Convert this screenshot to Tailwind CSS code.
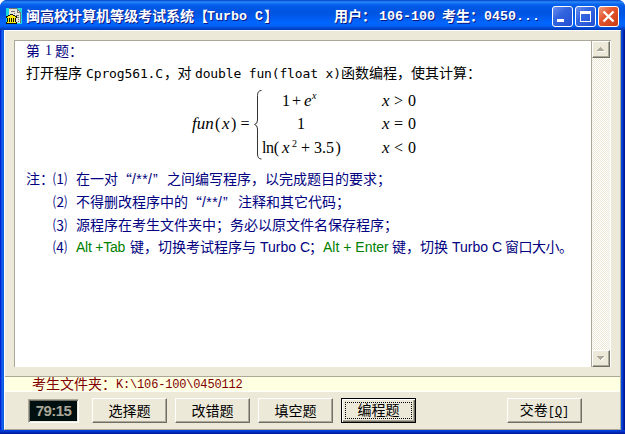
<!DOCTYPE html>
<html lang="zh-CN">
<head>
<meta charset="utf-8">
<title>闽高校计算机等级考试系统</title>
<script src="https://cdn.jsdelivr.net/npm/@tailwindcss/browser@4"></script>
</head>
<body class="bg-white overflow-hidden">
<div class="w-[625px] h-[434px] flex flex-col rounded-t-[7px] overflow-hidden bg-[linear-gradient(to_right,#0019cf_0,#0831d9_1px,#166aee_2px,#0855dd_4px,#0855dd_621px,#0441d8_622px,#001ea0_624px,#00138c_625px)] whitespace-nowrap font-['Liberation_Sans','Noto_Sans_CJK_SC',sans-serif] text-[14px]">

  <!-- title bar -->
  <header class="h-[30px] shrink-0 flex items-start pl-[6px] bg-[linear-gradient(to_bottom,#0040c8_0,#2a88f8_2px,#0a66f0_4px,#0058e6_7px,#0054e0_13px,#005cf0_18px,#0066ff_23px,#0062f8_26px,#0048d0_28px,#003ab8_30px)] text-white">
    <svg class="w-[16px] h-[16px] mt-[8px] shrink-0" viewBox="0 0 16 16" shape-rendering="crispEdges">
      <path fill="#18d8e0" d="M0 0h16v16H0z"/>
      <path fill="#e4e4dc" d="M3 1h8l4 4v10H3z"/>
      <path fill="#77776f" d="M3 0h8v1H3zM11 1h1v3h3v1h-4zM12 2h1v1h-1zM13 3h1v1h-1zM5 3h4v1H5zM8 5h1v1H8zM10 7h3v1h-3zM11 9h2v1h-2zM12 11h1v1h-1zM12 13h1v1h-1zM14 5h1v10h-1z"/>
      <path fill="#101010" d="M4 6h3v1h2v1h2v2h-1v4h1v2H0v-2h1v-4H0V8h2V7h2z"/>
      <path fill="#ffec10" d="M4 7h3v1h2v1h1v1H1V9h1V8h2zM2 10h1v4H2zM4 10h1v4H4zM6 10h1v4H6zM8 10h1v4H8zM1 14h9v1H1z"/>
    </svg>
    <div class="flex font-bold leading-[20px] mt-[6px] ml-[4px] w-[526px] [text-shadow:1px_1px_0_#0a1883]">
      <span class="w-[181px]">闽高校计算机等级考试系统【</span>
      <span class="w-[57px] text-[13.33px] leading-[22px] font-['Liberation_Mono']">Turbo C</span>
      <span class="w-[70px]">】</span>
      <span class="w-[45px]">用户：</span>
      <span class="w-[63px] text-[13.33px] leading-[22px] font-['Liberation_Mono']">106-100</span>
      <span class="w-[44px]">考生：</span>
      <span class="text-[13.33px] leading-[22px] font-['Liberation_Mono'] ml-[-2px]">0450...</span>
    </div>
    <div class="flex gap-[2px] mt-[6px]">
      <svg class="w-[21px] h-[21px]" viewBox="0 0 21 21"><defs><linearGradient id="b" x2="1" y2="1"><stop stop-color="#6d92f0"/><stop offset=".4" stop-color="#3465e0"/><stop offset="1" stop-color="#1f4fd2"/></linearGradient><linearGradient id="r" x2="1" y2="1"><stop stop-color="#f0a083"/><stop offset=".4" stop-color="#e4562f"/><stop offset="1" stop-color="#c93a12"/></linearGradient></defs><rect x=".5" y=".5" width="20" height="20" rx="2.5" fill="url(#b)" stroke="#fff"/><path fill="#fff" d="M5 13h7v3H5z"/></svg>
      <svg class="w-[21px] h-[21px]" viewBox="0 0 21 21"><rect x=".5" y=".5" width="20" height="20" rx="2.5" fill="url(#b)" stroke="#fff"/><path fill="#fff" fill-rule="evenodd" d="M5 5h11v11H5zM6 8h9v7H6z"/></svg>
      <svg class="w-[21px] h-[21px]" viewBox="0 0 21 21"><rect x=".5" y=".5" width="20" height="20" rx="2.5" fill="url(#r)" stroke="#fff"/><path stroke="#fff" stroke-width="2.4" d="M5.5 5.5l10 10M15.500 5.500l-10 10"/></svg>
    </div>
  </header>

  <!-- client area -->
  <main class="mx-[4px] h-[400px] shrink-0 flex flex-col bg-[#ece9d8] border-t border-l border-t-white border-l-white border-r border-b border-r-[#aca899] border-b-[#aca899]">
    <div class="ml-[9px] mt-[9px] w-[597px] h-[327px] flex border-t border-l border-[#aca899] shrink-0">
      <section class="w-[576px] h-[326px] bg-white text-[#000080] pl-[11px] overflow-hidden flex flex-col">
        <div class="flex shrink-0 h-[21px] leading-[20px]"><span class="w-[19px]">第</span><span class="w-[10px] font-['Liberation_Serif']">1</span><span>题：</span></div>
        <div class="flex shrink-0 h-[22px] leading-[22px] text-black"><span class="w-[60px]">打开程序</span><span class="w-[78px] text-[13px] leading-[23px] tracking-[-0.13px] font-['DejaVu_Sans_Mono']">Cprog561.C</span><span class="w-[31px] tracking-[-0.5px]">，对</span><span class="w-[146px] text-[13px] leading-[23px] tracking-[-0.15px] font-['DejaVu_Sans_Mono']">double fun(float x)</span><span>函数编程，使其计算：</span></div>

        <!-- piecewise formula -->
        <svg class="block shrink-0 w-[250px] h-[84px] ml-[154px]" viewBox="180 84 250 84" font-family="Liberation Serif, serif" font-size="16" fill="#000">
          <g font-style="italic"><text x="192" y="129" font-size="17">fun</text><text x="222" y="129" font-size="17">x</text><text x="304" y="106" font-size="17">e</text><text x="312" y="99" font-size="10">x</text><text x="282" y="153" font-size="17">x</text><text x="382" y="106" font-size="17">x</text><text x="382" y="129" font-size="17">x</text><text x="382" y="153" font-size="17">x</text></g>
          <text x="215" y="129">(</text><text x="231" y="129">)</text><text x="240.500" y="129">=</text>
          <text x="282" y="106">1</text><text x="292" y="106">+</text><text x="297" y="129">1</text>
          <text x="262" y="153" textLength="17">ln(</text><text x="292" y="146.500" font-size="10">2</text><text x="301" y="153">+</text><text x="314" y="153" textLength="20">3.5</text><text x="335.500" y="153">)</text>
          <text x="394" y="106">&gt;</text><text x="394" y="129">=</text><text x="394" y="153">&lt;</text>
          <text x="408" y="106">0</text><text x="408" y="129">0</text><text x="408" y="153">0</text>
          <path d="M261.500 90.500q-4 0-4 5V120q0 4-3 4.500q3 .5 3 4.500v25q0 5 4 5" fill="none" stroke="#333" stroke-width="1"/>
        </svg>

        <div class="flex shrink-0 h-[23px] leading-[23px]"><span class="w-[27px]">注：</span><span class="w-[23px]">⑴</span><span class="w-[42px]">在一对</span><span class="w-[14px] text-right font-['Noto_Sans_CJK_SC']">“</span><span class="w-[21px] tracking-[0.4px]">/**/</span><span class="w-[14px] font-['Liberation_Sans']">”</span><span>之间编写程序，以完成题目的要求；</span></div>
        <div class="flex shrink-0 h-[23px] leading-[23px] pl-[27px]"><span class="w-[23px]">⑵</span><span class="w-[112px]">不得删改程序中的</span><span class="w-[14px] text-right font-['Noto_Sans_CJK_SC']">“</span><span class="w-[21px] tracking-[0.4px]">/**/</span><span class="w-[15px] font-['Liberation_Sans']">”</span><span>注释和其它代码；</span></div>
        <div class="flex shrink-0 h-[22px] leading-[23px] pl-[27px]"><span class="w-[23px]">⑶</span><span>源程序在考生文件夹中；务必以原文件名保存程序；</span></div>
        <div class="flex shrink-0 h-[22px] leading-[22px] pl-[27px]"><span class="w-[23px]">⑷</span><span class="w-[54px] text-[#008000] tracking-[-0.25px]">Alt +Tab</span><span class="w-[28px]">键，</span><span class="w-[102px]">切换考试程序与</span><span class="w-[49px]">Turbo C</span><span class="w-[14px]">；</span><span class="w-[69px] text-[#008000]">Alt + Enter</span><span class="w-[60px]">键，切换</span><span class="w-[53px]">Turbo C</span><span class="tracking-[-0.5px]">窗口大小。</span></div>
      </section>
      <aside class="w-[20px] h-[326px] flex flex-col justify-between border-l border-r border-l-[#aca899] border-r-white bg-[repeating-conic-gradient(#ece9d8_0_25%,#fff_0_50%)] bg-[length:2px_2px]">
        <div class="h-[17px] bg-[#ece9d8] border border-t-white border-l-white border-r-[#716f64] border-b-[#716f64] shadow-[inset_-1px_-1px_0_#aca899] flex items-center justify-center"><svg class="w-[8px] h-[5px]" viewBox="0 0 8 5" shape-rendering="crispEdges"><path fill="#fff" d="M1 4h7v1H1z"/><path fill="#aca899" d="M3 0h1v1h1v1h1v1h1v1H0V3h1V2h1V1h1z"/></svg></div>
        <div class="h-[17px] bg-[#ece9d8] border border-t-white border-l-white border-r-[#716f64] border-b-[#716f64] shadow-[inset_-1px_-1px_0_#aca899] flex items-center justify-center"><svg class="w-[8px] h-[5px]" viewBox="0 0 8 5" shape-rendering="crispEdges"><path fill="#fff" d="M8 1v1H7v1H6v1H5v1H4V3z"/><path fill="#aca899" d="M0 0h7v1H6v1H5v1H4v1H3V3H2V2H1V1H0z"/></svg></div>
      </aside>
    </div>

    <div class="mt-[9px] h-[16px] shrink-0 flex bg-[#ffffe1] border-t border-b border-t-[#aca899] border-b-white text-[#800000] leading-[14px] pl-[27px]"><span class="w-[84px]">考生文件夹：</span><span class="text-[12px] leading-[16px] tracking-[-0.17px] font-['Liberation_Mono']">K:\106-100\0450112</span></div>

    <footer class="flex pl-[23px] pt-[6px] text-black leading-[22px]">
      <div class="w-[51px] h-[24px] mt-px bg-[#001010] border border-t-[#aca899] border-l-[#aca899] border-b-white border-r-white shadow-[inset_1px_1px_0_#716f64,inset_-1px_-1px_0_#ece9d8] text-center text-[#aca899] font-bold text-[15px] tracking-[-0.6px] leading-[21px]">79:15</div>
      <button class="ml-[13px] w-[75px] h-[25px] border border-t-white border-l-white border-r-[#716f64] border-b-[#716f64] shadow-[inset_-1px_-1px_0_#aca899]">选择题</button>
      <button class="ml-[8px] w-[75px] h-[25px] border border-t-white border-l-white border-r-[#716f64] border-b-[#716f64] shadow-[inset_-1px_-1px_0_#aca899]">改错题</button>
      <button class="ml-[8px] w-[75px] h-[25px] border border-t-white border-l-white border-r-[#716f64] border-b-[#716f64] shadow-[inset_-1px_-1px_0_#aca899]">填空题</button>
      <button class="ml-[8px] w-[75px] h-[25px] border border-black shadow-[inset_1px_1px_0_#fff,inset_-1px_-1px_0_#716f64,inset_-2px_-2px_0_#aca899] p-[3px]"><span class="block h-[17px] leading-[15px] border border-dotted border-black">编程题</span></button>
      <button class="ml-[91px] w-[75px] h-[25px] border border-t-white border-l-white border-r-[#716f64] border-b-[#716f64] shadow-[inset_-1px_-1px_0_#aca899]">交卷<span class="text-[12px] font-['Liberation_Mono']">[<u>Q</u>]</span></button>
    </footer>
  </main>
  <div class="h-[4px] bg-[linear-gradient(to_bottom,#0441d8,#0030c8_50%,#00138c)]"></div>
</div>
</body>
</html>
